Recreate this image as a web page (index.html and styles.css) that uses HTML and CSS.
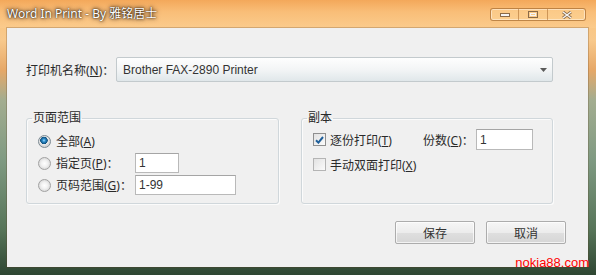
FILE: index.html
```html
<!DOCTYPE html>
<html lang="zh-CN">

<head>
    <meta charset="UTF-8">
    <title>Word In Print - By 雅铭居士</title>
    <link rel="stylesheet" href="styles.css">
</head>

<body>

    <div class="window">
        <div class="titlebar">
            <span class="title">Word In Print - By 雅铭居士</span>
            <div class="caption-buttons">
                <span class="cap cap-min">
                    <svg width="10" height="4" viewBox="0 0 10 4"><rect x="0.5" y="0.5" width="9" height="3" fill="#f4f4f4" stroke="#8a6a48"/></svg>
                </span>
                <span class="cap cap-max">
                    <svg width="10" height="7" viewBox="0 0 10 7"><rect x="0.5" y="0.5" width="9" height="6" fill="none" stroke="#8a6a48"/><rect x="2.5" y="2.5" width="5" height="2" fill="none" stroke="#f4f4f4"/></svg>
                </span>
                <span class="cap cap-close">
                    <svg width="10" height="8" viewBox="0 0 10 8"><path d="M1 1 L9 7 M9 1 L1 7" stroke="#8a6a48" stroke-width="3"/><path d="M1 1 L9 7 M9 1 L1 7" stroke="#f4f4f4" stroke-width="1.4"/></svg>
                </span>
            </div>
        </div>

        <div class="client">
            <div class="printer-row">
                <label class="field-label">打印机名称(<u>N</u>)：</label>
                <div class="combo">
                    <span class="combo-value">Brother FAX-2890 Printer</span>
                    <svg width="7" height="4" viewBox="0 0 7 4"><path d="M0 0 H7 L3.5 4 Z" fill="#5a5a5a"/></svg>
                </div>
            </div>

            <div class="groups">
                <fieldset class="group group-range">
                    <legend>页面范围</legend>
                    <div class="options">
                        <div class="opt">
                            <span class="radio checked"></span>
                            <span>全部(<u>A</u>)</span>
                        </div>
                        <div class="opt">
                            <span class="radio"></span>
                            <span class="opt-label">指定页(<u>P</u>)：</span>
                            <input class="text-input input-page" type="text" value="1">
                        </div>
                        <div class="opt">
                            <span class="radio"></span>
                            <span class="opt-label">页码范围(<u>G</u>)：</span>
                            <input class="text-input input-range" type="text" value="1-99">
                        </div>
                    </div>
                </fieldset>

                <fieldset class="group group-copies">
                    <legend>副本</legend>
                    <div class="options options-copies">
                        <div class="opt">
                            <span class="check checked">
                                <svg width="9" height="8" viewBox="0 0 9 8"><path d="M1 4.2 L3.4 6.6 L8 1" fill="none" stroke="#1f5f9a" stroke-width="2"/></svg>
                            </span>
                            <span class="collate-label">逐份打印(<u>T</u>)</span>
                            <span class="count-label">份数(<u>C</u>)：</span>
                            <input class="text-input input-count" type="text" value="1">
                        </div>
                        <div class="opt">
                            <span class="check"></span>
                            <span>手动双面打印(<u>X</u>)</span>
                        </div>
                    </div>
                </fieldset>
            </div>

            <div class="buttons">
                <button>保存</button>
                <button>取消</button>
            </div>

            <span class="watermark">nokia88.com</span>
        </div>
    </div>

</body>

</html>
```

FILE: styles.css
```css
body {
    margin: 0;
    font-family: "Noto Sans", "Noto Sans CJK SC", sans-serif;
    font-size: 12px;
    color: #2a2a2a;
    white-space: nowrap;
}

.window {
    width: 596px;
    height: 275px;
    display: flex;
    flex-direction: column;
    background: linear-gradient(to bottom, #f5ae62 0, #fac683 20px, #f8c98c 40px, #e6a868 70px, #a3ad90 100px, #7f9a82 160px, #567458 230px, #2e4632 275px);
}

.titlebar {
    height: 28px;
    display: flex;
    justify-content: space-between;
    align-items: flex-start;
    padding: 0 10px 0 7px;
    background: linear-gradient(to bottom, #f3a85a, #f9be78 12px, #fbcb8c 28px);
}

.title {
    margin-top: 6px;
    line-height: 16px;
    color: #fff;
    text-shadow: 0 0 5px rgba(30, 15, 0, 0.9), 0 0 3px rgba(30, 15, 0, 0.8), 0 0 1px rgba(30, 15, 0, 0.8);
}

.caption-buttons {
    display: flex;
    margin-top: 8px;
    height: 11px;
    border: 1px solid rgba(150, 85, 25, 0.6);
    border-radius: 3px;
    box-shadow: inset 0 0 0 1px rgba(255, 255, 255, 0.45);
    background: rgba(255, 225, 170, 0.35);
}

.cap {
    display: flex;
    align-items: center;
    justify-content: center;
    box-sizing: border-box;
}

.cap-min {
    width: 27px;
}

.cap-max {
    width: 29px;
    border-left: 1px solid rgba(150, 85, 25, 0.45);
}

.cap-close {
    width: 38px;
    border-left: 1px solid rgba(150, 85, 25, 0.45);
}

.client {
    position: relative;
    flex: 1;
    margin: 0 8px 8px 7px;
    padding: 29px 22px 0 19px;
    background-color: #f0f0f0;
    box-shadow: 0 0 0 1px rgba(90, 60, 30, 0.25);
}

.printer-row {
    display: flex;
    align-items: center;
    height: 25px;
}

.field-label {
    flex-shrink: 0;
    width: 90px;
}

.combo {
    width: 437px;
    height: 25px;
    box-sizing: border-box;
    display: flex;
    align-items: center;
    justify-content: space-between;
    padding: 0 5px 0 6px;
    border: 1px solid #c3cacd;
    border-radius: 2px;
    background: linear-gradient(to bottom, #fefefe, #f3f5f6 50%, #e0e7ea);
}

.combo-value {
    font-family: "Liberation Sans", sans-serif;
    font-size: 12px;
    color: #333;
}

.groups {
    display: flex;
    gap: 22px;
    margin-top: 28px;
}

.group {
    margin: 0;
    padding: 0 0 8px 11px;
    box-sizing: border-box;
    min-width: 0;
    border: 1px solid #d0d7db;
    border-radius: 3px;
    box-shadow: inset 1px 1px 0 #fbfbfb, 1px 1px 0 #fbfbfb;
}

.group legend {
    padding: 0 1px;
    margin-left: -6px;
    line-height: 16px;
}

.group-range {
    width: 253px;
}

.group-copies {
    width: 252px;
}

.options {
    display: grid;
    row-gap: 2px;
    margin-top: 5px;
}

.options-copies {
    row-gap: 4px;
    margin-top: 3px;
}

.opt {
    display: flex;
    align-items: center;
    height: 20px;
}

.options-copies .opt {
    height: 21px;
}

.radio {
    flex-shrink: 0;
    width: 13px;
    height: 13px;
    box-sizing: border-box;
    margin-right: 5px;
    border: 1px solid #a2a2a2;
    border-radius: 50%;
    background: radial-gradient(circle, #ffffff 0, #f2f2f2 3px, #d9d9d9 6px);
}

.radio.checked {
    border-color: #7c8a93;
    background: radial-gradient(circle at 45% 40%, #9fdcff 0, #2c8ccb 1.5px, #0f4f7c 3.5px, #e9e9e9 4px, #d4d4d4 6px);
}

.opt-label {
    flex-shrink: 0;
    width: 79px;
}

.check {
    flex-shrink: 0;
    width: 13px;
    height: 13px;
    box-sizing: border-box;
    margin-right: 4px;
    display: flex;
    align-items: center;
    justify-content: center;
    border: 1px solid #b4b4b4;
    background: linear-gradient(135deg, #e2e2e2, #fbfbfb);
}

.check.checked {
    border-color: #8f8f8f;
}

.collate-label {
    flex-shrink: 0;
    width: 93px;
}

.count-label {
    flex-shrink: 0;
    width: 53px;
}

.text-input {
    flex-shrink: 0;
    height: 20px;
    box-sizing: border-box;
    margin: 0;
    padding: 0 3px;
    border: 1px solid #b9b9b9;
    border-top-color: #a5a5a5;
    background-color: #fff;
    font-family: "Liberation Sans", sans-serif;
    font-size: 12px;
    color: #333;
}

.input-page {
    width: 44px;
}

.input-range {
    width: 101px;
}

.input-count {
    width: 57px;
    height: 21px;
}

.buttons {
    display: flex;
    justify-content: flex-end;
    gap: 11px;
    margin-top: 17px;
}

button {
    width: 80px;
    height: 23px;
    padding: 0;
    border: 1px solid #acacac;
    border-radius: 2px;
    background: linear-gradient(to bottom, #f6f6f6, #ececec 50%, #dfdfdf 51%, #d6d6d6);
    box-shadow: inset 0 0 0 1px rgba(255, 255, 255, 0.7);
    font-family: "Noto Sans", "Noto Sans CJK SC", sans-serif;
    font-size: 12px;
    color: #333;
}

.watermark {
    position: absolute;
    right: -1px;
    bottom: -2px;
    font-family: "Liberation Sans", sans-serif;
    font-size: 13px;
    line-height: 13px;
    color: #ff0000;
}
```
